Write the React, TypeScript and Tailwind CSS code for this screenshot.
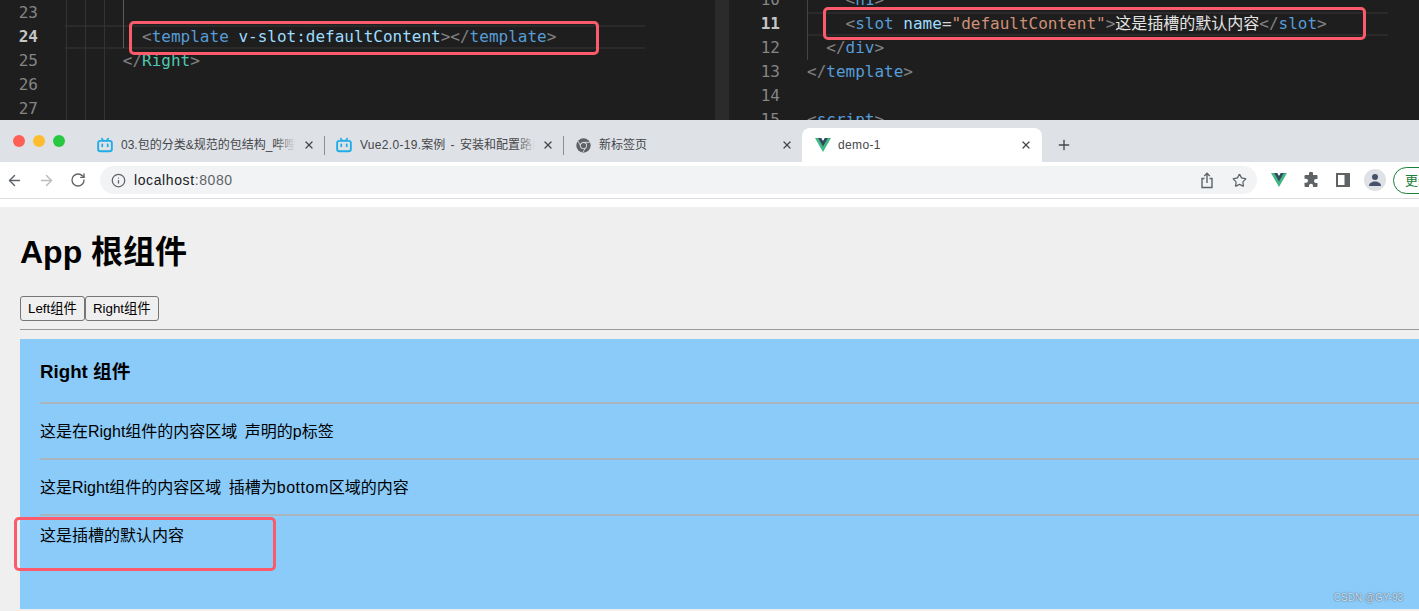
import { ArrowLeft, ArrowRight, RotateCw, Info, Star, X, Plus } from "lucide-react";

const B = ({ children }: { children: string }) => <span className="text-[#808080]">{children}</span>;
const T = ({ children }: { children: string }) => <span className="text-[#569cd6]">{children}</span>;
const A = ({ children }: { children: string }) => <span className="text-[#9cdcfe]">{children}</span>;

function Row({ n, active, children }: { n: number; active?: boolean; children?: React.ReactNode }) {
  return (
    <div className="flex h-[24px] leading-[24px]">
      <div className={"w-[var(--num)] text-right shrink-0 " + (active ? "text-[#c6c6c6] font-bold" : "text-[#858585]")}>{n}</div>
      <div className={"ml-[var(--gap)] w-[var(--code)] whitespace-pre box-border " + (active ? "border-y-2 border-[#2a2a2a] leading-[20px]" : "")}>
        {children}
      </div>
    </div>
  );
}

function Bili() {
  return (
    <svg width="16" height="16" viewBox="0 0 17 16" fill="none" className="shrink-0">
      <path d="M5 1.2 7 3.4M12 1.2 10 3.4" stroke="#23ade5" strokeWidth="1.7" strokeLinecap="round" />
      <rect x="1.2" y="3.6" width="14.6" height="11" rx="2.4" stroke="#23ade5" strokeWidth="2" />
      <path d="M5.6 7.4v2M11.4 7.4v2" stroke="#23ade5" strokeWidth="1.9" strokeLinecap="round" />
    </svg>
  );
}

function ChromeIcon() {
  return (
    <svg width="15" height="15" viewBox="0 0 24 24" className="shrink-0">
      <circle cx="12" cy="12" r="11.5" fill="#5f6368" />
      <path d="M12 7h10M8 14 3 4.5M16 14l-5.5 9.5" stroke="#dee1e6" strokeWidth="1.4" />
      <circle cx="12" cy="12" r="5.6" fill="#dee1e6" />
      <circle cx="12" cy="12" r="4.2" fill="#5f6368" />
    </svg>
  );
}

function VueLogo({ w = 16, h = 14 }: { w?: number; h?: number }) {
  return (
    <svg width={w} height={h} viewBox="0 0 261.76 226.69" className="shrink-0">
      <path d="M161.096.001l-30.225 52.351L100.647.001H-.005l130.877 226.688L261.749.001z" fill="#41b883" />
      <path d="M161.096.001l-30.225 52.351L100.647.001H52.346l78.526 136.01L209.398.001z" fill="#34495e" />
    </svg>
  );
}

function Tab({ icon, title, width, closeGap, sep }: { icon: React.ReactNode; title: React.ReactNode; width: string; closeGap: string; sep?: boolean }) {
  return (
    <div className="flex items-center h-[34px] shrink-0">
      <div className="w-[24px] flex justify-center">{icon}</div>
      <div className={"relative ml-[4px] overflow-hidden whitespace-nowrap text-[12px] text-[#45474a] " + width}>
        {title}
        <div className="absolute right-0 top-0 h-full w-[18px] bg-gradient-to-r from-transparent to-[#dee1e6]" />
      </div>
      <X size={12} strokeWidth={2.6} className={"text-[#45474a] shrink-0 " + closeGap} />
      {sep ? <div className="w-px h-[19px] bg-[#8b8e93] ml-[9px] mr-[7px]" /> : null}
    </div>
  );
}

const redBox = "absolute border-[3px] border-[#fb5b6b] rounded-[5px] pointer-events-none";

export default function App() {
  return (
    <div className="relative h-[611px] w-full overflow-hidden bg-[#efefef] font-['Liberation_Sans','Noto_Sans_CJK_SC',sans-serif]">
      {/* Editor */}
      <div className="relative flex h-[120px] overflow-hidden bg-[#1e1e1e] font-['DejaVu_Sans_Mono','Noto_Sans_CJK_SC',monospace] text-[16px]">
        <div className="relative w-[715px] shrink-0 mt-px [--num:38px] [--gap:27px] [--code:580px]">
          <div className="absolute left-[66px] -top-px h-[120px] w-px bg-[#333]" />
          <div className="absolute left-[85px] -top-px h-[120px] w-px bg-[#333]" />
          <div className="absolute left-[104px] -top-px h-[120px] w-px bg-[#333]" />
          <div className="absolute left-[123px] -top-px h-[48px] w-px bg-[#5a5a5a]" />
          <Row n={23} />
          <Row n={24} active>
            <span>{"        "}</span>
            <B>{"<"}</B>
            <T>template</T> <A>v-slot:defaultContent</A>
            <B>{"></"}</B>
            <T>template</T>
            <B>{">"}</B>
          </Row>
          <Row n={25}>
            <span>{"      "}</span>
            <B>{"</"}</B>
            <span className="text-[#4ec9b0]">Right</span>
            <B>{">"}</B>
          </Row>
          <Row n={26} />
          <Row n={27} />
        </div>
        <div className="w-[14px] shrink-0 bg-[#2b2b2b]" />
        <div className="relative flex-1 -mt-[12px] [--num:51px] [--gap:27px] [--code:581px]">
          <div className="absolute left-[78px] top-0 h-[72px] w-px bg-[#444]" />
          <Row n={10}>
            <span>{"    "}</span>
            <B>{"<"}</B>
            <T>h1</T>
            <B>{">"}</B>
          </Row>
          <Row n={11} active>
            <span>{"    "}</span>
            <B>{"<"}</B>
            <T>slot</T> <A>name</A>
            <span className="text-[#d4d4d4]">=</span>
            <span className="text-[#ce9178]">"defaultContent"</span>
            <B>{">"}</B>
            <span className="text-[#e4e4e4]">这是插槽的默认内容</span>
            <B>{"</"}</B>
            <T>slot</T>
            <B>{">"}</B>
          </Row>
          <Row n={12}>
            <span>{"  "}</span>
            <B>{"</"}</B>
            <T>div</T>
            <B>{">"}</B>
          </Row>
          <Row n={13}>
            <B>{"</"}</B>
            <T>template</T>
            <B>{">"}</B>
          </Row>
          <Row n={14} />
          <Row n={15}>
            <B>{"<"}</B>
            <T>script</T>
            <B>{">"}</B>
          </Row>
        </div>
      </div>
      <div className={redBox + " left-[129px] top-[21px] w-[470px] h-[34px]"} />
      <div className={redBox + " left-[823px] top-[7px] w-[543px] h-[33px]"} />

      {/* Tab strip */}
      <div className="flex h-[42px] bg-[#dee1e6]">
        <div className="flex items-center gap-[8px] pl-[13px] w-[93px] shrink-0 h-[42px]">
          <div className="w-[12px] h-[12px] rounded-full bg-[#ff5f57]" />
          <div className="w-[12px] h-[12px] rounded-full bg-[#febc2e]" />
          <div className="w-[12px] h-[12px] rounded-full bg-[#28c840]" />
        </div>
        <div className="flex items-start pt-[8px] h-[42px]">
          <Tab icon={<Bili />} title="03.包的分类&规范的包结构_哔哩哔哩_bilibili" width="w-[174px]" closeGap="ml-[8px]" sep />
          <Tab
            icon={<Bili />}
            title={<span className="[word-spacing:2px]"><span className="tracking-[0.3px]">Vue2.0-19.</span>案例 - 安装和配置路由_哔哩哔哩</span>}
            width="w-[175px]"
            closeGap="ml-[7px]"
            sep
          />
          <Tab icon={<ChromeIcon />} title="新标签页" width="w-[174px]" closeGap="ml-[8px]" />
          <div className="ml-[9px] flex items-center w-[240px] h-[34px] rounded-t-[8px] bg-white shrink-0 pl-[13px] pr-[10px]">
            <VueLogo />
            <span className="ml-[7px] text-[12px] tracking-[0.35px] text-[#45474a] flex-1">demo-1</span>
            <X size={12} strokeWidth={2.6} className="text-[#45474a]" />
          </div>
          <Plus size={16} strokeWidth={2} className="ml-[14px] mt-[9px] text-[#45474a] shrink-0" />
        </div>
      </div>

      {/* Toolbar */}
      <div className="flex items-center h-[36px] bg-white pl-[6px] border-b border-[#dadce0] box-content">
        <ArrowLeft size={17} strokeWidth={2} className="text-[#5f6368] shrink-0" />
        <ArrowRight size={17} strokeWidth={2} className="ml-[15px] text-[#babcbe] shrink-0" />
        <RotateCw size={16} strokeWidth={2} className="ml-[15px] text-[#5f6368] shrink-0" />
        <div className="ml-[14px] flex items-center w-[1157px] h-[28px] rounded-full bg-[#f1f3f4] pl-[11px] pr-[10px] shrink-0">
          <Info size={15} strokeWidth={2} className="text-[#5f6368]" />
          <span className="ml-[8px] text-[14px] text-[#202124] tracking-[0.6px]">
            localhost<span className="text-[#5f6368]">:8080</span>
          </span>
          <div className="flex-1" />
          <svg width="14" height="17" viewBox="0 0 14 17" fill="none" stroke="#5f6368" strokeWidth="1.4" className="shrink-0">
            <path d="M4.5 6.5H2v9h10v-9H9.5" />
            <path d="M7 11V1.5M4.3 4 7 1.3 9.7 4" />
          </svg>
          <Star size={15} strokeWidth={2} className="ml-[18px] text-[#5f6368]" />
        </div>
        <div className="ml-[14px] shrink-0"><VueLogo /></div>
        <svg width="16" height="16" viewBox="0 0 16 16" fill="#5f6368" className="ml-[16px] shrink-0">
          <path d="M6 1.5a2 2 0 0 1 4 0V3h3.5a1 1 0 0 1 1 1v3H13a2 2 0 0 0 0 4h1.5v3a1 1 0 0 1-1 1H10v-1.3a2 2 0 0 0-4 0V15H2.5a1 1 0 0 1-1-1v-3.2H3a2 2 0 0 0 0-4H1.500V4a1 1 0 0 1 1-1H6z" />
        </svg>
        <svg width="14" height="14" viewBox="0 0 14 14" className="ml-[17px] shrink-0">
          <path fillRule="evenodd" d="M0 0h14v14H0zM2 2v10h6.500V2z" fill="#5f6368" />
        </svg>
        <div className="ml-[14px] w-[22px] h-[22px] rounded-full bg-[#dee1e6] flex items-center justify-center shrink-0">
          <svg width="14" height="14" viewBox="0 0 14 14" fill="#45526b">
            <circle cx="7" cy="4" r="3" />
            <path d="M1 13c0-3 3-4.500 6-4.500s6 1.500 6 4.500z" />
          </svg>
        </div>
        <div className="ml-[7px] w-[60px] h-[27px] rounded-l-full border border-[#188038] pl-[11px] text-[13px] leading-[25px] text-[#188038] shrink-0 whitespace-nowrap">更新</div>
      </div>
      <div className="h-[8px] bg-white" />

      {/* Page */}
      <div className="pl-[20px] pt-[27px] text-black">
        <h1 className="h-[37px] text-[32px] leading-[37px] font-bold">App 根组件</h1>
        <div className="flex mt-[25px]">
          <button className="h-[25px] px-[7px] border border-[#767676] rounded-[3px] bg-[#efefef] text-[13.33px]">Left组件</button>
          <button className="h-[25px] px-[7px] border border-[#767676] rounded-[3px] bg-[#efefef] text-[13.33px]">Right组件</button>
        </div>
        <div className="mt-[8px] h-px bg-[#9a9a9a]" />
        <div className="mt-[9px] h-[270px] bg-[#8bcbf9] pl-[20px] pt-[22px] relative">
          <h3 className="h-[22px] text-[18.72px] leading-[22px] font-bold">Right 组件</h3>
          <div className="mt-[19px] h-[2px] bg-[#a9b4bd]" />
          <p className="mt-[18px] h-[20px] text-[16px] leading-[20px] [word-spacing:3px]">这是在Right组件的内容区域 声明的p标签</p>
          <div className="mt-[16px] h-[2px] bg-[#a9b4bd]" />
          <p className="mt-[18px] h-[20px] text-[16px] leading-[20px] [word-spacing:3px]">
            这是Right组件的内容区域 插槽为<span className="tracking-[0.5px]">bottom</span>区域的内容
          </p>
          <div className="mt-[16px] h-[2px] bg-[#a9b4bd]" />
          <p className="mt-[10px] h-[20px] text-[16px] leading-[20px]">这是插槽的默认内容</p>
          <span className="absolute right-[16px] bottom-[5px] text-[10px] leading-[12px] text-[#cfdde9] [text-shadow:0_0_1.5px_#33424f]">CSDN @GY-93</span>
        </div>
      </div>
      <div className={redBox + " left-[14px] top-[517px] w-[262px] h-[54px]"} />
    </div>
  );
}
